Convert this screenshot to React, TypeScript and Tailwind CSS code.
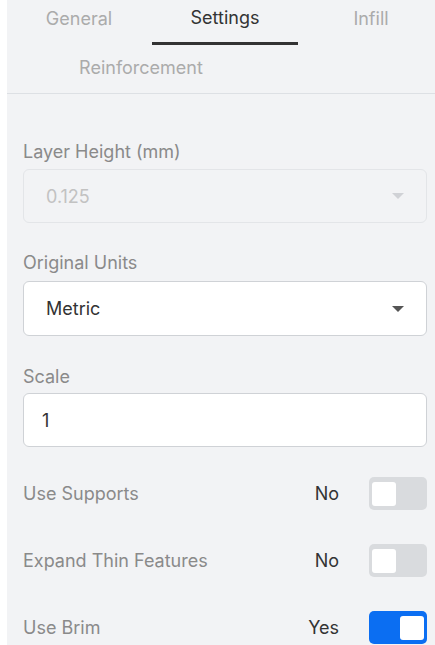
import React, { useState } from 'react';

const font = { fontFamily: 'Inter, "Noto Sans", sans-serif' };

const Caret: React.FC<{ muted?: boolean }> = ({ muted }) => (
  <svg width="12" height="6" viewBox="0 0 12 6" className={muted ? 'text-[#d0d2d6]' : 'text-[#555]'}>
    <path d="M0 0h12L6 6z" fill="currentColor" />
  </svg>
);

interface ToggleRowProps {
  label: string;
  on: boolean;
  onChange: (v: boolean) => void;
}

const ToggleRow: React.FC<ToggleRowProps> = ({ label, on, onChange }) => (
  <div className="flex items-center h-[33px] mb-[34px]">
    <span className="flex-1 text-[18px] text-[#8a8a8a]">{label}</span>
    <span className="w-[40px] text-right text-[18px] text-[#333] mr-[30px]">{on ? 'Yes' : 'No'}</span>
    <button
      onClick={() => onChange(!on)}
      className={`w-[58px] h-[33px] rounded-[5px] flex items-center px-[3px] ${
        on ? 'bg-[#0b6ef2] justify-end' : 'bg-[#d9dbde] justify-start'
      }`}
    >
      <span className="block w-[24px] h-[24px] rounded-[3px] bg-white" />
    </button>
  </div>
);

export default function App() {
  const [supports, setSupports] = useState(false);
  const [thin, setThin] = useState(false);
  const [brim, setBrim] = useState(true);

  return (
    <div className="w-[435px] h-[645px] overflow-hidden bg-white flex" style={font}>
      <div className="ml-[7px] flex-1 bg-[#f2f3f5] overflow-hidden">
        {/* tabs */}
        <div className="border-b border-[#dde0e4] w-[460px] -ml-[1px]">
          <div className="flex h-[45px]">
            <div className="w-[146px] flex items-center justify-center text-[18px] text-[#ababab] pb-[8px]">General</div>
            <div className="w-[146px] flex items-center justify-center text-[18px] text-[#333] pb-[8px] border-b-[3px] border-[#333]">
              Settings
            </div>
            <div className="w-[146px] flex items-center justify-center text-[18px] text-[#ababab] pb-[8px]">Infill</div>
          </div>
          <div className="flex h-[48px]">
            <div className="w-[270px] flex items-center justify-center text-[18px] text-[#ababab] pb-[4px]">Reinforcement</div>
          </div>
        </div>

        <div className="pl-[16px] pr-[8px] pt-[44px]">
          <div className="text-[18px] text-[#8a8a8a] leading-[28px]">Layer Height (mm)</div>
          <div className="mt-[3px] h-[54px] rounded-[6px] border border-[#e3e5e8] flex items-center px-[22px] text-[18px] text-[#c2c2c2]">
            <span className="flex-1">0.125</span>
            <Caret muted />
          </div>

          <div className="mt-[26px] text-[18px] text-[#8a8a8a] leading-[28px]">Original Units</div>
          <div className="mt-[4px] h-[55px] rounded-[6px] border border-[#cfd2d6] bg-white flex items-center px-[22px] text-[18px] text-[#333]">
            <span className="flex-1">Metric</span>
            <Caret />
          </div>

          <div className="mt-[27px] text-[18px] text-[#8a8a8a] leading-[28px]">Scale</div>
          <div className="mt-[2px] h-[54px] rounded-[6px] border border-[#cfd2d6] bg-white flex items-center px-[18px] text-[18px] text-[#333]">
            1
          </div>

          <div className="mt-[30px]">
            <ToggleRow label="Use Supports" on={supports} onChange={setSupports} />
            <ToggleRow label="Expand Thin Features" on={thin} onChange={setThin} />
            <ToggleRow label="Use Brim" on={brim} onChange={setBrim} />
          </div>
        </div>
      </div>
    </div>
  );
}
